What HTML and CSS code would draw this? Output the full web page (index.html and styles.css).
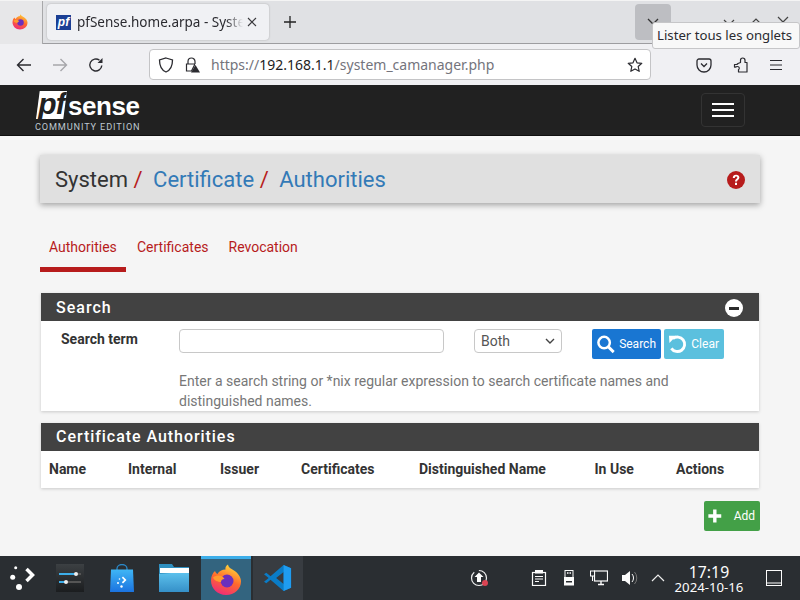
FILE: index.html
```html
<!DOCTYPE html>
<html lang="fr">
<head>
<meta charset="utf-8">
<title>pfSense.home.arpa - System: Certificate: Authorities</title>
<link rel="stylesheet" href="styles.css">
</head>
<body>
<div class="tabstrip">
  <div class="pinned">
    <svg class="ff-small" width="16" height="16" viewBox="0 0 32 32"><defs><linearGradient id="ffa" x1="0.700" y1="0" x2="0.300" y2="1"><stop offset="0" stop-color="#ffd43a"/><stop offset=".5" stop-color="#ff6a2c"/><stop offset="1" stop-color="#ee2a7b"/></linearGradient></defs><path d="M16 31C7.5 31 1 24.5 1 16.500 1 12 3 8.500 5 7c.5 1.500 1.500 2.500 2.500 3C9 6.500 12 4.500 16 4c-.500-1 0-2.500 1-3.500C18 5 24 5 28 10c2.500 3 3 6 3 7.500C31 25 24.500 31 16 31z" fill="url(#ffa)"/><circle cx="17" cy="17" r="6.500" fill="#6b2fbd"/><path d="M3 13.500c4-3 9.500-2.500 11.500 1.500-2.500 0-3.500 1.500-3.500 3-3 0-7-1.500-8-4.500z" fill="#ff9a2e"/></svg>
  </div>
  <div class="tab">
    <span class="favicon"><i>pf</i></span>
    <span class="tab-title">pfSense.home.arpa - Syste</span>
    <svg class="tab-x" width="12" height="12" viewBox="0 0 12 12"><path d="M2 2l8 8M10 2l-8 8" stroke="#3a3a3e" stroke-width="1.100" fill="none"/></svg>
  </div>
  <svg class="newtab" width="14" height="14" viewBox="0 0 14 14"><path d="M7 1v12M1 7h12" stroke="#222" stroke-width="1.300"/></svg>
  <div class="spacer"></div>
  <div class="listtabs"><svg width="14" height="14" viewBox="0 0 14 14"><path d="M2 4l5 5 5-5" stroke="#333" stroke-width="1.300" fill="none"/></svg></div>
  <div class="winctl">
    <svg width="14" height="14" viewBox="0 0 14 14"><path d="M2 5l5 5 5-5" stroke="#444" stroke-width="1.200" fill="none"/></svg>
    <svg width="14" height="14" viewBox="0 0 14 14"><path d="M2 9l5-5 5 5" stroke="#444" stroke-width="1.200" fill="none"/></svg>
    <svg width="14" height="14" viewBox="0 0 14 14"><path d="M2 2l10 10M12 2L2 12" stroke="#444" stroke-width="1.200" fill="none"/></svg>
  </div>
</div>
<div class="toolbar">
  <svg class="nav-back" width="16" height="16" viewBox="0 0 16 16"><path d="M15 8H1.500M7.500 2l-6 6 6 6" stroke="#2b2b30" stroke-width="1.400" fill="none"/></svg>
  <svg class="nav-fwd" width="16" height="16" viewBox="0 0 16 16"><path d="M1 8h13.500M8.500 2l6 6-6 6" stroke="#a6a6aa" stroke-width="1.400" fill="none"/></svg>
  <svg class="nav-reload" width="16" height="16" viewBox="0 0 16 16"><path d="M13.800 8.500A6 6 0 1 1 11.500 3.200" stroke="#2b2b30" stroke-width="1.400" fill="none"/><path d="M14.500 1v5h-5z" fill="#2b2b30"/></svg>
  <div class="urlbar">
    <svg class="shield" width="16" height="16" viewBox="0 0 16 16"><path d="M8 1l6.500 2c0 6-1.500 10-6.500 12C3 13 1.500 9 1.500 3z" stroke="#2b2b30" stroke-width="1.300" fill="none"/></svg>
    <svg class="lock" width="16" height="16" viewBox="0 0 16 16"><path d="M4 7V4.500a3.500 3.500 0 0 1 7 0V7" stroke="#2b2b30" stroke-width="1.200" fill="none"/><path d="M2.500 7h8v1l-3 6h-5z" stroke="#2b2b30" stroke-width="1.200" fill="none"/><path d="M11.500 8l4.500 7.500H7z" fill="#2b2b30"/></svg>
    <span class="url"><span class="url-dim">https://</span>192.168.1.1<span class="url-dim">/system_camanager.php</span></span>
    <svg class="star" width="16" height="16" viewBox="0 0 16 16"><path d="M8 1.300l2 4.500 4.800.5-3.600 3.200 1 4.800L8 11.900l-4.200 2.400 1-4.800L1.200 6.300 6 5.800z" stroke="#2b2b30" stroke-width="1.200" fill="none" stroke-linejoin="round"/></svg>
  </div>
  <div class="tools">
    <svg width="16" height="16" viewBox="0 0 16 16"><path d="M3 2h10a2 2 0 0 1 2 2v4a7 7 0 0 1-14 0V4a2 2 0 0 1 2-2z" stroke="#2b2b30" stroke-width="1.300" fill="none"/><path d="M5 6.500l3 3 3-3" stroke="#2b2b30" stroke-width="1.300" fill="none"/></svg>
    <svg width="16" height="16" viewBox="0 0 16 16"><path d="M8.500 5.500V3.200a2.200 2.200 0 0 1 2.200-2.200c1.300 0 2.300 1 2.300 2.200v2.300h2v9.500H6.500v-2.500c1.200-.3 1.200-3-1-3-1.200 0-2.500 1-3 .5V7.500H4.500C5 7.500 5.500 7 6 6.500l2.500-1z" stroke="#2b2b30" stroke-width="1.200" fill="none" stroke-linejoin="round"/></svg>
    <svg width="16" height="16" viewBox="0 0 16 16"><path d="M2 3.500h12M2 8h12M2 12.500h12" stroke="#2b2b30" stroke-width="1.200"/></svg>
  </div>
</div>
<div class="tooltip">Lister tous les onglets</div>

<div class="viewport">
  <header class="navbar">
    <div class="brand">
      <div class="brand-top"><span class="pf">pf</span><span class="sense">sense</span></div>
      <div class="edition">COMMUNITY EDITION</div>
    </div>
    <button class="burger" type="button" aria-label="Menu"><span></span><span></span><span></span></button>
  </header>
  <main class="content">
    <div class="titlebar">
      <h1 class="crumbs">System<span class="sep">/</span><a>Certificate</a><span class="sep">/</span><a>Authorities</a></h1>
      <svg class="help" width="18" height="18" viewBox="0 0 18 18"><circle cx="9" cy="9" r="9" fill="#b71c1c"/><path d="M5.800 7c0-2 1.400-3.200 3.300-3.200S12.400 5 12.400 6.600c0 2.200-2.400 2.300-2.400 4H8c0-2.600 2.300-2.900 2.300-4.200 0-.600-.500-1-1.200-1-.8 0-1.300.6-1.300 1.600zM8 11.800h2v2.200H8z" fill="#fff"/></svg>
    </div>
    <nav class="tabs">
      <a class="pagetab active">Authorities</a>
      <a class="pagetab">Certificates</a>
      <a class="pagetab">Revocation</a>
    </nav>
    <section class="panel search-panel">
      <div class="panel-head"><span>Search</span><span class="collapse"><i></i></span></div>
      <div class="search-body">
        <div class="search-row">
          <label class="search-label">Search term</label>
          <input class="search-input" type="text">
          <select class="search-select"><option>Both</option></select>
          <div class="search-btns">
            <button class="btn btn-blue" type="button"><svg width="20" height="20" viewBox="0 0 20 20"><circle cx="8.500" cy="8.500" r="6" stroke="#fff" stroke-width="2.600" fill="none"/><path d="M13 13l5.500 5.500" stroke="#fff" stroke-width="3"/></svg>Search</button>
            <button class="btn btn-cyan" type="button"><svg width="20" height="20" viewBox="0 0 20 20"><path d="M5 4.500A7.500 7.500 0 1 1 3.500 14.500" stroke="#fff" stroke-width="3" fill="none"/><path d="M1 1.500h7.500L1.500 9z" fill="#fff"/></svg>Clear</button>
          </div>
        </div>
        <p class="search-help">Enter a search string or *nix regular expression to search certificate names and distinguished names.</p>
      </div>
    </section>
    <section class="panel ca-panel">
      <div class="panel-head"><span>Certificate Authorities</span></div>
      <div class="ca-cols">
        <b class="c1">Name</b><b class="c2">Internal</b><b class="c3">Issuer</b><b class="c4">Certificates</b><b class="c5">Distinguished Name</b><b class="c6">In Use</b><b class="c7">Actions</b>
      </div>
    </section>
    <div class="actions">
      <button class="btn btn-green" type="button"><svg width="18" height="18" viewBox="0 0 18 18"><path d="M9 0.500v17M0.500 9h17" stroke="#fff" stroke-width="4.500"/></svg>Add</button>
    </div>
  </main>
</div>

<footer class="taskbar">
  <div class="launcher">
    <svg width="28" height="28" viewBox="0 0 28 28"><path d="M18.500 5l6 6-6 6" stroke="#fff" stroke-width="3.500" fill="none"/><circle cx="7.700" cy="3.700" r="1.500" fill="#fff"/><circle cx="4.700" cy="13.300" r="2.500" fill="#fff"/><circle cx="11" cy="23" r="3" fill="#fff"/></svg>
  </div>
  <div class="task"><svg width="28" height="28" viewBox="0 0 28 28"><defs><linearGradient id="mix" x1="0" y1="0" x2="0" y2="1"><stop offset="0" stop-color="#3c4043"/><stop offset="1" stop-color="#1b1d1f"/></linearGradient></defs><rect width="28" height="28" fill="url(#mix)"/><path d="M3 10h22M3 18h22" stroke="#555" stroke-width="2"/><path d="M3 10h17M3 18h7" stroke="#3daee9" stroke-width="2"/><circle cx="20" cy="10" r="2" fill="#eee"/><circle cx="10" cy="18" r="2" fill="#eee"/></svg></div>
  <div class="task"><svg width="24" height="28" viewBox="0 0 24 28"><defs><linearGradient id="bag" x1="0" y1="0" x2="0" y2="1"><stop offset="0" stop-color="#3fb6f5"/><stop offset="1" stop-color="#1b73e0"/></linearGradient></defs><path d="M7 7V4.500a5 4 0 0 1 10 0V7" stroke="#2a88c8" stroke-width="1.300" fill="none"/><path d="M1 5.500h22l1 22.500H0z" fill="url(#bag)"/><path d="M13 12.500l3.500 3.500-3.500 3.500-1.200-1.200 2.300-2.300-2.300-2.300z" fill="#fff"/><circle cx="9.500" cy="15" r=".8" fill="#fff"/><circle cx="8" cy="19" r="1" fill="#fff"/><circle cx="11.500" cy="22.500" r="1.200" fill="#fff"/></svg></div>
  <div class="task"><svg width="30" height="30" viewBox="0 0 30 30"><defs><linearGradient id="fold" x1="0" y1="0" x2="0" y2="1"><stop offset="0" stop-color="#5cc0ec"/><stop offset="1" stop-color="#3590c8"/></linearGradient></defs><path d="M0 1h13l2 3h15v25H0z" fill="#2f8fbf"/><rect x="1" y="5" width="29" height="5" fill="#fff"/><path d="M0 11l12-1h18v19H0z" fill="url(#fold)"/></svg></div>
  <div class="task task-active"><svg width="32" height="32" viewBox="0 0 32 32"><defs><linearGradient id="ffb" x1="0.700" y1="0" x2="0.300" y2="1"><stop offset="0" stop-color="#ffdc3a"/><stop offset=".5" stop-color="#ff6a2c"/><stop offset="1" stop-color="#ee2a7b"/></linearGradient></defs><path d="M16 31C7.500 31 1 24.500 1 16.500 1 12 3 8.500 5 7c.5 1.500 1.500 2.500 2.500 3C9 7 12 5.500 15.500 5.500 15 3.500 16 1.500 18 .5 18.500 5 24 5 28 10c2.500 3 3 6 3 7.500C31 25 24.500 31 16 31z" fill="url(#ffb)"/><circle cx="17" cy="17" r="6.500" fill="#6b2fbd"/><path d="M3 13.500c4-3 9.500-2.500 11.500 1.500-2.500 0-3.500 1.500-3.500 3-3 0-7-1.500-8-4.500z" fill="#ff9a2e"/></svg></div>
  <div class="task task-hover"><svg width="28" height="28" viewBox="0 0 30 30"><path d="M21 1l8 3.500v21L21 29 7 17 2.500 20.500 0 19l5-4-5-4 2.500-1.500L7 13zm0 7.500L13 15l8 6.500z" fill="#0a7cc7"/><path d="M21 1l8 3.500v21L21 29z" fill="#1f9cf0"/></svg></div>
  <div class="spacer"></div>
  <div class="tray">
    <svg class="tray-up" width="20" height="20" viewBox="0 0 20 20"><circle cx="9" cy="10" r="7.500" stroke="#eee" stroke-width="1.200" fill="none" stroke-dasharray="30 5"/><path d="M9 4.500l4.500 4.500H11v5H7V9H4.500z" fill="#fff"/><circle cx="15" cy="15" r="3" fill="#da4453"/></svg>
    <svg class="tray-clip" width="16" height="16" viewBox="0 0 16 16"><rect x="1.500" y="2.500" width="13" height="13" fill="none" stroke="#fcfcfc" stroke-width="1.200"/><rect x="4" y="0" width="8" height="3.500" fill="#fcfcfc"/><path d="M4 6.500h8M4 9h8M4 11.500h4" stroke="#fcfcfc"/></svg>
    <svg class="tray-usb" width="16" height="16" viewBox="0 0 16 16"><rect x="4" y="0.500" width="8" height="7" fill="none" stroke="#fcfcfc"/><path d="M6 3h1.500M8.500 3H10" stroke="#fcfcfc" stroke-width="1.500"/><rect x="3" y="7" width="10" height="8.500" fill="#fcfcfc"/><rect x="5" y="11" width="6" height="1.500" fill="#2a2e32"/></svg>
    <svg class="tray-net" width="18" height="16" viewBox="0 0 18 16"><rect x="4.500" y="1" width="13" height="10" fill="none" stroke="#fcfcfc" stroke-width="1.200"/><path d="M8 14.500h6M11 11v3.500" stroke="#fcfcfc" stroke-width="1.400"/><rect x="0.500" y="1" width="4" height="5" fill="#2a2e32" stroke="#fcfcfc"/><path d="M2.500 6v5" stroke="#fcfcfc"/></svg>
    <svg class="tray-vol" width="18" height="16" viewBox="0 0 18 16"><path d="M1 5h3l5-4v14l-5-4H1z" fill="#fcfcfc"/><path d="M11 4a6 6 0 0 1 0 8" stroke="#fcfcfc" fill="none"/><path d="M13.500 2a9 9 0 0 1 0 12" stroke="#777" fill="none"/></svg>
    <svg class="tray-chev" width="14" height="10" viewBox="0 0 14 10"><path d="M1 8l6-6 6 6" stroke="#eee" stroke-width="1.200" fill="none"/></svg>
  </div>
  <div class="clock"><span class="time">17:19</span><span class="date">2024-10-16</span></div>
  <svg class="showdesk" width="16" height="16" viewBox="0 0 16 16"><rect x=".5" y=".5" width="15" height="15" fill="none" stroke="#fcfcfc"/><path d="M1 13h14" stroke="#fcfcfc"/></svg>
</footer>
</body>
</html>
```
FILE: styles.css
```css
* { box-sizing: border-box; }
html, body { margin: 0; padding: 0; }
body { width: 800px; height: 600px; overflow: hidden; display: flex; flex-direction: column; position: relative; font-family: Roboto, sans-serif; background: #f5f5f5; }
.spacer { flex: 1; }

.tabstrip { height: 44px; flex: none; display: flex; align-items: center; background: #e0e1e4; border-top: 1px solid #f4f4f4; border-bottom: 1px solid #9d9da0; }
.pinned { width: 43px; height: 43px; display: flex; align-items: center; justify-content: flex-start; padding-left: 12px; background: #e7e7e9; border-right: 1px solid #a8a8aa; }
.tab { width: 222px; height: 36px; margin-left: 4px; display: flex; align-items: center; background: #f0f1f4; border-radius: 4px; box-shadow: 0 0 2px rgba(0,0,0,.25); padding-left: 9px; }
.favicon { width: 15px; height: 15px; background: #1b3f94; color: #fff; font: italic bold 12px/15px "Liberation Sans", sans-serif; text-align: center; flex: none; }
.favicon i { display: block; background: #1b3f94; }
.tab-title { margin-left: 6px; width: 166px; white-space: nowrap; font: 13.500px "Noto Sans", sans-serif; color: #2b2b30; -webkit-mask-image: linear-gradient(90deg, #000 90%, transparent); mask-image: linear-gradient(90deg, #000 90%, transparent); }
.tab-x { margin-left: 3px; }
.newtab { margin-left: 14px; }
.listtabs { width: 36px; height: 36px; background: #bdbec2; border-radius: 4px; display: flex; align-items: center; justify-content: center; }
.winctl { width: 129px; display: flex; justify-content: flex-end; gap: 13px; padding-right: 10px; }

.toolbar { height: 41px; flex: none; display: flex; align-items: center; background: #f0f0f3; padding-left: 16px; }
.nav-fwd { margin-left: 20px; }
.nav-reload { margin-left: 20px; }
.urlbar { width: 502px; height: 31px; margin-left: 45px; background: #fff; border: 1px solid #c4c4c6; border-radius: 4px; display: flex; align-items: center; padding-left: 8px; }
.lock { margin-left: 10px; }
.url { margin-left: 11px; font: 14px "Noto Sans", sans-serif; color: #1d1d22; flex: 1; white-space: nowrap; }
.url-dim { color: #74747c; }
.star { margin-right: 7px; }
.tools { display: flex; gap: 20px; margin-left: 45px; }

.tooltip { position: absolute; left: 652px; top: 22px; width: 148px; height: 27px; background: #f8f8f8; border: 1px solid #c6c6c8; border-radius: 3px; font: 13.200px/25px "Noto Sans", sans-serif; color: #2b2b30; padding-left: 4px; white-space: nowrap; }

.viewport { flex: 1; min-height: 0; display: flex; flex-direction: column; overflow: hidden; }
.navbar { height: 51px; flex: none; background: #212121; border-bottom: 1px solid #101010; display: flex; align-items: flex-start; justify-content: space-between; padding: 6px 55px 0 35px; }
.brand { width: 106px; }
.brand-top { display: flex; align-items: flex-start; height: 30px; padding-left: 1px; }
.pf { display: block; width: 31px; height: 28px; background: #fff; color: #212121; font: italic bold 30px/26px "Liberation Sans", sans-serif; text-align: center; letter-spacing: -1px; clip-path: polygon(12% 0, 100% 0, 88% 100%, 0 100%); }
.sense { color: #fff; font: bold 26px/24px "Liberation Sans", sans-serif; letter-spacing: -.45px; margin: 3px 0 0 1px; }
.edition { color: #bfc7cf; font: 9.200px/11px Roboto, sans-serif; letter-spacing: .85px; white-space: nowrap; }
.burger { width: 44px; height: 34px; margin-top: 2px; background: none; border: 1px solid #333; border-radius: 4px; padding: 0; display: flex; flex-direction: column; align-items: center; justify-content: center; gap: 4px; }
.burger span { width: 22px; height: 2px; background: #fff; }

.content { flex: 1; min-height: 0; background: #f5f5f5; padding: 19px 40px 0; }
.titlebar { height: 48px; background: #e0e0e0; box-shadow: 0 2px 6px rgba(0,0,0,.35); display: flex; align-items: center; justify-content: space-between; padding: 2px 15px 0; }
.crumbs { margin: 0; font: 400 22px/30px Roboto, sans-serif; color: #333; white-space: nowrap; }
.crumbs a { color: #337ab7; }
.sep { color: #b71c1c; margin: 0 10.500px 0 5.500px; }
.help { margin-right: 0; }
.tabs { display: flex; height: 70px; margin-top: 20px; }
.pagetab { height: 49px; padding: 15px 9px 0; margin-right: 2px; font: 14px/18px Roboto, sans-serif; color: #b71c1c; white-space: nowrap; }
.pagetab.active { width: 86px; border-bottom: 5px solid #b71c1c; }
.panel { margin: 0 1px; background: #fff; box-shadow: 0 1px 3px rgba(0,0,0,.18); }
.panel-head { height: 28px; background: #424242; color: #fff; font: 500 16px/24px Roboto, sans-serif; letter-spacing: 1px; padding: 2px 16px 0 15px; display: flex; justify-content: space-between; align-items: center; }
.collapse { width: 18px; height: 18px; border-radius: 50%; background: #fff; display: flex; align-items: center; justify-content: center; }
.collapse i { display: block; width: 10px; height: 3px; background: #2b2b2b; }
.search-body { height: 90px; padding: 8px 20px 0; }
.search-row { display: flex; align-items: flex-start; }
.search-label { width: 118px; font: 700 14px/20px Roboto, sans-serif; color: #333; }
.search-input { width: 265px; height: 24px; border: 1px solid #c8c8c8; border-radius: 4px; background: #fff; }
.search-select { width: 88px; height: 24px; margin-left: 30px; border: 1px solid #c8c8c8; border-radius: 4px; background: #fff url("data:image/svg+xml,%3Csvg xmlns='http://www.w3.org/2000/svg' width='10' height='6'%3E%3Cpath d='M1 1l4 4 4-4' stroke='%23444' stroke-width='1.400' fill='none'/%3E%3C/svg%3E") no-repeat right 6px center; appearance: none; -webkit-appearance: none; font: 14px Roboto, sans-serif; color: #555; padding-left: 6px; }
.search-btns { display: flex; gap: 3px; margin-left: 30px; }
.btn { height: 30px; border: 0; border-radius: 2px; color: #fff; font: 12px/30px Roboto, sans-serif; display: flex; align-items: center; padding: 0 5px 0 4px; gap: 4px; white-space: nowrap; }
.btn-blue { width: 69px; background: #1976d2; }
.btn-cyan { width: 60px; background: #5bc0de; }
.btn-green { width: 56px; background: #43a047; gap: 12px; }
.search-help { margin: 12px 0 0 118px; font: 14px/20px Roboto, sans-serif; color: #777; }
.ca-panel { margin-top: 12px; }
.ca-panel .panel-head { padding-top: 0; letter-spacing: .95px; }
.ca-cols { height: 37px; display: grid; grid-template-columns: 79px 92px 81px 118px 175.500px 81.500px 1fr; padding: 0 8px 2px; align-items: center; font: 14px/20px Roboto, sans-serif; color: #333; }
.ca-cols b { font-weight: 700; white-space: nowrap; }
.actions { display: flex; justify-content: flex-end; margin-top: 13px; }

.taskbar { height: 44px; flex: none; background: #2a2e32; display: flex; align-items: center; padding-left: 8px; color: #fcfcfc; }
.launcher { width: 28px; height: 28px; margin-right: 8px; }
.task { width: 52px; height: 44px; display: flex; align-items: center; justify-content: center; }
.task-active { width: 50px; background: #33647f; border-top: 3px solid #3daee9; margin: 0 2px 0 1px; }
.task-hover { width: 50px; background: #383c41; }
.tray { display: flex; align-items: center; }
.tray-clip { margin-left: 41px; }
.tray-usb { margin-left: 14px; }
.tray-net { margin-left: 13px; }
.tray-vol { margin-left: 13px; }
.tray-chev { margin-left: 12px; }
.clock { width: 72px; margin-left: 8px; display: flex; flex-direction: column; align-items: center; font-family: "Noto Sans", sans-serif; color: #fcfcfc; }
.time { font-size: 15.800px; line-height: 16px; margin-top: 1px; }
.date { font-size: 13.200px; line-height: 14px; }
.showdesk { margin: 0 18px 0 21px; }
```
